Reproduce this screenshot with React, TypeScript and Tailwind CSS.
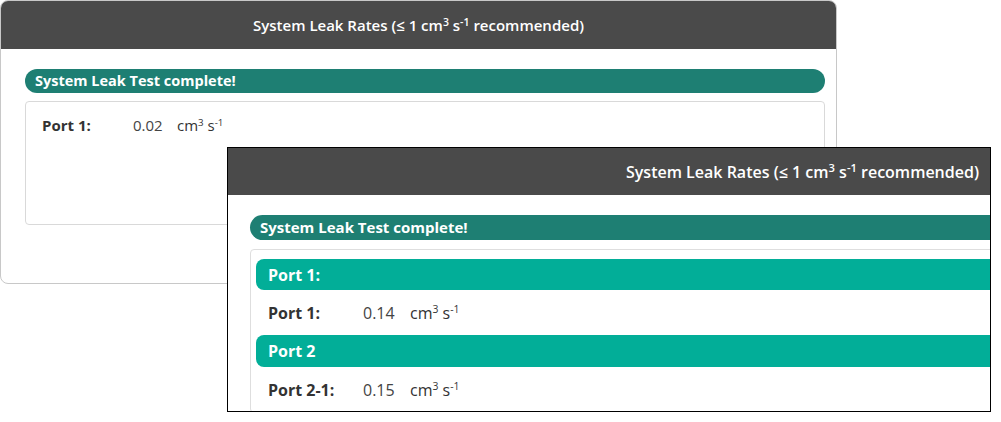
import React from "react";

const font = { fontFamily: '"Open Sans", "Noto Sans", sans-serif' };

const Unit = () => (
  <span>
    cm<sup className="text-[0.65em]">3</sup> s<sup className="text-[0.65em]">-1</sup>
  </span>
);

const Title = () => (
  <span>
    System Leak Rates (≤ 1 cm<sup className="text-[0.7em]">3</sup> s
    <sup className="text-[0.7em]">-1</sup> recommended)
  </span>
);

const Row = ({ label, value, big }: { label: string; value: string; big?: boolean }) => (
  <div className={big ? "flex items-center text-[16px] text-[#333]" : "flex items-center text-[15px] text-[#333]"}>
    <span className={big ? "w-[95px] font-bold" : "w-[91px] font-bold"}>{label}</span>
    <span className={big ? "w-[47px] text-[#444]" : "w-[44px] text-[#444]"}>{value}</span>
    <Unit />
  </div>
);

export default function App() {
  return (
    <div className="relative w-[1001px] h-[422px] bg-white" style={font}>
      {/* first window */}
      <div className="w-[837px] h-[284px] rounded-lg border border-[#c8c8c8] overflow-hidden bg-white">
        <div className="h-12 bg-[#4a4a4a] flex items-center justify-center text-white font-semibold text-[15px]">
          <Title />
        </div>
        <div className="pl-6 pr-[11px] pt-5">
          <div className="h-6 rounded-full bg-[#1e7f73] px-2.5 flex items-center text-white font-bold text-[14.5px]">
            System Leak Test complete!
          </div>
          <div className="mt-2 h-[124px] border rounded border-[#d9d9d9] px-4 pt-3">
            <Row label="Port 1:" value="0.02" />
          </div>
        </div>
      </div>

      {/* second window, overlapping */}
      <div className="absolute left-[227px] top-[147px] w-[764px] h-[265px] border border-black bg-white overflow-hidden">
        <div className="h-[47px] bg-[#4a4a4a] flex items-center justify-end pr-[11px] text-white font-semibold text-[16px]">
          <Title />
        </div>
        <div className="pl-[22px] pt-[20px] w-[820px]">
          <div className="h-[25px] rounded-full bg-[#1e7f73] px-2.5 flex items-center text-white font-bold text-[15px]">
            System Leak Test complete!
          </div>
          <div className="mt-[9px] border border-[#dedede] rounded px-[5px] pt-[9px]">
            <div className="h-[31px] rounded-lg bg-[#02ae98] px-3 flex items-center text-white font-bold text-[16px]">
              Port 1:
            </div>
            <div className="h-[45px] px-3 flex items-center">
              <Row label="Port 1:" value="0.14" big />
            </div>
            <div className="h-[32px] rounded-lg bg-[#02ae98] px-3 flex items-center text-white font-bold text-[16px]">
              Port 2
            </div>
            <div className="h-[45px] px-3 flex items-center">
              <Row label="Port 2-1:" value="0.15" big />
            </div>
          </div>
        </div>
      </div>
    </div>
  );
}
